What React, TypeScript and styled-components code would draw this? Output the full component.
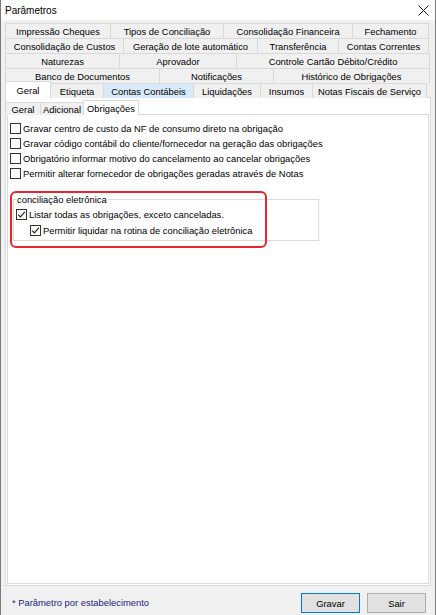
import React from 'react';
import styled, { createGlobalStyle } from 'styled-components';

const GlobalStyle = createGlobalStyle`
  html, body {
    margin: 0;
    padding: 0;
    background: #ffffff;
  }
  body {
    font-family: "Liberation Sans", Arial, sans-serif;
    font-size: 9.4px;
    color: #000;
  }
`;

type TabDef = { label: string; w: number; active?: boolean; hover?: boolean };

const tabRows: TabDef[][] = [
  [
    { label: 'Impressão Cheques', w: 106 },
    { label: 'Tipos de Conciliação', w: 114 },
    { label: 'Consolidação Financeira', w: 130 },
    { label: 'Fechamento', w: 77 },
  ],
  [
    { label: 'Consolidação de Custos', w: 119 },
    { label: 'Geração de lote automático', w: 135 },
    { label: 'Transferência', w: 82 },
    { label: 'Contas Correntes', w: 91 },
  ],
  [
    { label: 'Naturezas', w: 115 },
    { label: 'Aprovador', w: 118 },
    { label: 'Controle Cartão Débito/Crédito', w: 194 },
  ],
  [
    { label: 'Banco de Documentos', w: 155 },
    { label: 'Notificações', w: 115 },
    { label: 'Histórico de Obrigações', w: 157 },
  ],
  [
    { label: 'Geral', w: 46, active: true },
    { label: 'Etiqueta', w: 54 },
    { label: 'Contas Contábeis', w: 91, hover: true },
    { label: 'Liquidações', w: 68 },
    { label: 'Insumos', w: 53 },
    { label: 'Notas Fiscais de Serviço', w: 115 },
  ],
];

const subTabs: TabDef[] = [
  { label: 'Geral', w: 36 },
  { label: 'Adicional', w: 44 },
  { label: 'Obrigações', w: 56, active: true },
];

const options = [
  'Gravar centro de custo da NF de consumo direto na obrigação',
  'Gravar código contábil do cliente/fornecedor na geração das obrigações',
  'Obrigatório informar motivo do cancelamento ao cancelar obrigações',
  'Permitir alterar fornecedor de obrigações geradas através de Notas',
];

const Window = styled.div`
  width: 436px;
  height: 615px;
  box-sizing: border-box;
  background: #f0f0f0;
  border-left: 1px solid #7a7a7a;
  border-right: 1px solid #7a7a7a;
  display: flex;
  flex-direction: column;
  overflow: hidden;
`;

const TitleBar = styled.div`
  height: 20px;
  flex: none;
  background: #ffffff;
  display: flex;
  align-items: center;
  justify-content: space-between;
  padding: 0 6px 0 4px;
  font-size: 10px;
`;

const Body = styled.div`
  flex: 1;
  display: flex;
  flex-direction: column;
  padding: 3px 4px 0 3px;
`;

const TabRow = styled.div`
  display: flex;
  height: 15px;
  padding-left: 1px;
`;

const Tab = styled.div<{ $w: number; $active?: boolean; $hover?: boolean }>`
  width: ${p => p.$w}px;
  flex: none;
  box-sizing: border-box;
  height: ${p => (p.$active ? 17 : 15)}px;
  margin-top: ${p => (p.$active ? -2 : 0)}px;
  margin-left: -1px;
  border: 1px solid #d9d9d9;
  border-bottom: none;
  background: ${p => (p.$active ? '#ffffff' : p.$hover ? '#d8eaf9' : '#f0f0f0')};
  display: flex;
  align-items: center;
  justify-content: center;
  white-space: nowrap;
  position: relative;
  z-index: ${p => (p.$active ? 2 : 1)};
  &:first-child {
    margin-left: 0;
  }
`;

const Panel = styled.div`
  flex: 1;
  background: #ffffff;
  border: 1px solid #d9d9d9;
  margin-left: 1px;
  margin-top: -1px;
  padding: 3px 0 1px 0;
  display: flex;
  flex-direction: column;
`;

const SubTabRow = styled.div`
  display: flex;
  height: 13px;
  margin-top: 1px;
  margin-left: -1px;
`;

const SubTab = styled(Tab)`
  height: ${p => (p.$active ? 15 : 13)}px;
`;

const SubPanel = styled.div`
  flex: 1;
  border: 1px solid #d9d9d9;
  margin: -1px 1px 0 1px;
  background: #ffffff;
  padding: 6px 0 0 2px;
  position: relative;
`;

const OptionRow = styled.label`
  display: flex;
  align-items: center;
  height: 15px;
  gap: 2px;
  white-space: nowrap;
`;

const Box = styled.span`
  width: 11px;
  height: 11px;
  box-sizing: border-box;
  border: 1px solid #333333;
  background: #ffffff;
  flex: none;
  display: flex;
  align-items: center;
  justify-content: center;
`;

const GroupBox = styled.fieldset`
  margin: 13px 0 0 3px;
  width: 306px;
  box-sizing: border-box;
  border: 1px solid #dcdcdc;
  padding: 2px 0 2px 2px;
  legend {
    padding: 0 1px;
    margin-left: 0;
  }
`;

const SubOption = styled(OptionRow)`
  padding-left: 14px;
  margin-top: 1px;
`;

const Highlight = styled.div`
  position: absolute;
  left: 2px;
  top: 76px;
  width: 257px;
  height: 57px;
  box-sizing: border-box;
  border: 2px solid #e8262b;
  border-radius: 6px;
  pointer-events: none;
`;

const Footer = styled.div`
  height: 29px;
  flex: none;
  box-sizing: border-box;
  display: flex;
  align-items: flex-end;
  padding: 0 5px 2px 8px;
`;

const Note = styled.span`
  color: #1a237e;
  flex: 1;
  line-height: 20px;
`;

const Button = styled.button<{ $default?: boolean }>`
  width: 59px;
  height: 20px;
  margin-left: 7px;
  box-sizing: border-box;
  background: #e1e1e1;
  border: 1px solid ${p => (p.$default ? '#0078d7' : '#adadad')};
  font-family: "Liberation Sans", Arial, sans-serif;
  font-size: 9.4px;
  color: #000;
  padding: 0;
`;

const Check = () => (
  <svg width="9" height="9" viewBox="0 0 9 9">
    <path d="M1.2 4.6 L3.4 6.8 L7.8 1.8" fill="none" stroke="#222" strokeWidth="1.2" />
  </svg>
);

const Checkbox = ({ checked }: { checked?: boolean }) => <Box>{checked && <Check />}</Box>;

const CloseIcon = () => (
  <svg width="11" height="11" viewBox="0 0 11 11">
    <path d="M0.5 0.5 L10.5 10.5 M10.5 0.5 L0.5 10.5" stroke="#222" strokeWidth="1" />
  </svg>
);

export default function App() {
  return (
    <>
      <GlobalStyle />
      <Window>
        <TitleBar>
          <span>Parâmetros</span>
          <CloseIcon />
        </TitleBar>
        <Body>
          {tabRows.map((row, i) => (
            <TabRow key={i}>
              {row.map(t => (
                <Tab key={t.label} $w={t.w} $active={t.active} $hover={t.hover}>
                  {t.label}
                </Tab>
              ))}
            </TabRow>
          ))}
          <Panel>
            <SubTabRow>
              {subTabs.map(t => (
                <SubTab key={t.label} $w={t.w} $active={t.active}>
                  {t.label}
                </SubTab>
              ))}
            </SubTabRow>
            <SubPanel>
              {options.map(o => (
                <OptionRow key={o}>
                  <Checkbox />
                  {o}
                </OptionRow>
              ))}
              <GroupBox>
                <legend>conciliação eletrônica</legend>
                <OptionRow>
                  <Checkbox checked />
                  Listar todas as obrigações, exceto canceladas.
                </OptionRow>
                <SubOption>
                  <Checkbox checked />
                  Permitir liquidar na rotina de conciliação eletrônica
                </SubOption>
              </GroupBox>
              <Highlight />
            </SubPanel>
          </Panel>
          <Footer>
            <Note>* Parâmetro por estabelecimento</Note>
            <Button $default>Gravar</Button>
            <Button>Sair</Button>
          </Footer>
        </Body>
      </Window>
    </>
  );
}
